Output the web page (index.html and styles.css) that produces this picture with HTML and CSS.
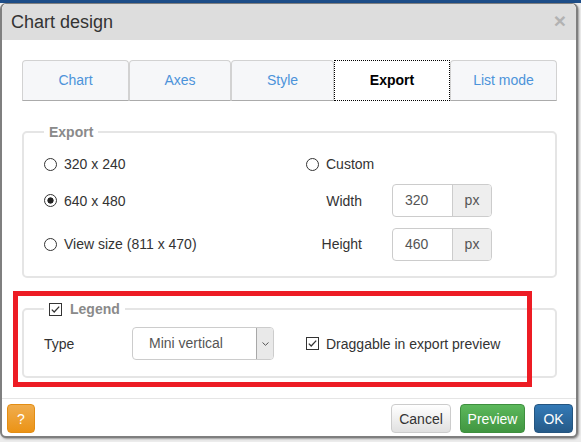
FILE: index.html
```html
<!DOCTYPE html>
<html>
<head>
<meta charset="utf-8">
<title>Chart design</title>
<link rel="stylesheet" href="styles.css">
</head>
<body>
<div class="dialog">
  <div class="header">
    <h1 class="title">Chart design</h1>
    <span class="close">×</span>
  </div>
  <div class="content">
    <ul class="tabs">
      <li class="tab tab-chart">Chart</li>
      <li class="tab tab-axes">Axes</li>
      <li class="tab tab-style">Style</li>
      <li class="tab tab-export active">Export</li>
      <li class="tab tab-list">List mode</li>
    </ul>
    <fieldset class="group group-export">
      <legend class="group-title">Export</legend>
      <div class="export-grid">
        <label class="radio"><span class="rb"></span>320 x 240</label>
        <label class="radio"><span class="rb"></span>Custom</label>
        <label class="radio"><span class="rb checked"></span>640 x 480</label>
        <div class="field">
          <span class="field-label">Width</span>
          <div class="input-group"><span class="input-value">320</span><span class="addon">px</span></div>
        </div>
        <label class="radio"><span class="rb"></span>View size (811 x 470)</label>
        <div class="field">
          <span class="field-label">Height</span>
          <div class="input-group"><span class="input-value">460</span><span class="addon">px</span></div>
        </div>
      </div>
    </fieldset>
    <fieldset class="group group-legend">
      <legend class="group-title legend-title">
        <svg class="cb" width="13" height="13" viewBox="0 0 13 13"><rect x="0.5" y="0.5" width="12" height="12" fill="#fff" stroke="#333"/><path d="M2.8 6.6 L5.2 9 L10.2 3.6" fill="none" stroke="#333" stroke-width="1.3"/></svg>
        <span>Legend</span>
      </legend>
      <div class="legend-row">
        <span class="type-label">Type</span>
        <div class="select">
          <span class="select-value">Mini vertical</span>
          <span class="select-arrow"><svg width="9" height="6" viewBox="0 0 9 6"><path d="M1.5 1.5 L4.5 4.3 L7.5 1.5" fill="none" stroke="#555" stroke-width="1"/></svg></span>
        </div>
        <label class="check">
          <svg class="cb" width="13" height="13" viewBox="0 0 13 13"><rect x="0.5" y="0.5" width="12" height="12" fill="#fff" stroke="#333"/><path d="M2.8 6.6 L5.2 9 L10.2 3.6" fill="none" stroke="#333" stroke-width="1.3"/></svg>
          <span>Draggable in export preview</span>
        </label>
      </div>
    </fieldset>
  </div>
  <div class="footer">
    <button class="btn btn-help">?</button>
    <div class="footer-right">
      <button class="btn btn-cancel">Cancel</button>
      <button class="btn btn-preview">Preview</button>
      <button class="btn btn-ok">OK</button>
    </div>
  </div>
</div>
<div class="annotation"></div>
</body>
</html>
```
FILE: styles.css
```css
html {
  background: linear-gradient(#1d4d88 0, #1d4d88 3px, #ececec 3px);
}
body {
  margin: 0;
  width: 581px;
  height: 442px;
  position: relative;
  overflow: hidden;
  font-family: "Liberation Sans", Arial, sans-serif;
  font-size: 14px;
  color: #333;
}
.dialog {
  margin-top: 3px;
  width: 578px;
  height: 435px;
  box-sizing: border-box;
  border: 2px solid #7f7f7f;
  border-top-width: 1px;
  border-radius: 6px;
  background: #fff;
  box-shadow: 1px 1px 2px rgba(0,0,0,0.35);
  overflow: hidden;
}
.header {
  height: 36px;
  background: #dddddd;
  display: flex;
  align-items: center;
  justify-content: space-between;
  padding: 0 10px 0 9px;
  border-radius: 5px 5px 0 0;
}
.title {
  margin: 0;
  font-size: 18px;
  font-weight: normal;
  color: #333;
}
.close {
  font-size: 21px;
  font-weight: bold;
  color: #b2b2b2;
  line-height: 1;
  margin-top: -3px;
}
.content {
  padding: 20px 19px 20px 20px;
}
.tabs {
  list-style: none;
  margin: 0;
  padding: 0;
  display: flex;
}
.tab {
  box-sizing: border-box;
  height: 41px;
  line-height: 39px;
  text-align: center;
  background: #f6f7f9;
  border: 1px solid #d2d2d2;
  border-bottom-color: #ababab;
  border-radius: 4px 4px 0 0;
  color: #4c93da;
}
.tab-chart { width: 107px; }
.tab-axes { width: 102px; }
.tab-style { width: 103px; }
.tab-export { width: 116px; }
.tab-list { width: 107px; }
.tab.active {
  background: #fff;
  border: 1px dotted #000;
  border-radius: 0;
  color: #000;
  font-weight: bold;
}
.group {
  margin: 23px 0 0;
  border: 2px solid #e5e5e5;
  border-radius: 5px;
  padding: 14px 20px 15px 20px;
  min-width: 0;
}
.group-legend {
  padding: 10px 20px 16px 20px;
}
.group-title {
  padding: 0 5px;
  line-height: 16px;
  font-weight: bold;
  color: #8a8a8a;
}
.legend-title {
  display: flex;
  align-items: center;
  gap: 8px;
}
.export-grid {
  display: grid;
  grid-template-columns: 262px auto;
  grid-template-rows: 20px 33px 34px;
  row-gap: 10px;
  align-items: center;
}
.radio {
  display: flex;
  align-items: center;
  color: #333;
}
.rb {
  width: 13px;
  height: 13px;
  box-sizing: border-box;
  border: 1px solid #333;
  border-radius: 50%;
  margin-right: 7px;
  background: #fff;
}
.rb.checked {
  background: radial-gradient(circle, #222 0, #222 2.8px, #fff 3.4px);
}
.field {
  display: flex;
  align-items: center;
}
.field-label {
  width: 56px;
  text-align: right;
  margin-right: 30px;
}
.input-group {
  display: flex;
  width: 100px;
  height: 33px;
  box-sizing: border-box;
  border: 1px solid #ccc;
  border-radius: 4px;
  overflow: hidden;
}
.input-value {
  flex: 1;
  padding-left: 12px;
  line-height: 31px;
  color: #555;
}
.addon {
  width: 38px;
  background: #eeeeee;
  border-left: 1px solid #ccc;
  text-align: center;
  line-height: 31px;
  color: #555;
}
.legend-row {
  display: flex;
  align-items: center;
}
.type-label {
  width: 88px;
}
.select {
  display: flex;
  width: 142px;
  height: 33px;
  box-sizing: border-box;
  border: 1px solid #ccc;
  border-radius: 4px;
  overflow: hidden;
}
.select-value {
  flex: 1;
  padding-left: 16px;
  line-height: 31px;
  color: #555;
}
.select-arrow {
  width: 16px;
  background: #e9e9e9;
  border-left: 1px solid #a8a8a8;
  display: flex;
  align-items: center;
  justify-content: center;
}
.check {
  display: flex;
  align-items: center;
  gap: 7px;
  margin-left: 32px;
}
.cb {
  display: block;
}
.footer {
  border-top: 1px solid #e5e5e5;
  padding: 5px 3px 4px 5px;
  display: flex;
  justify-content: space-between;
}
.footer-right {
  display: flex;
  gap: 9px;
}
.btn {
  height: 29px;
  box-sizing: border-box;
  border: 1px solid;
  border-radius: 4px;
  font-family: "Liberation Sans", Arial, sans-serif;
  font-size: 14px;
  padding: 0;
  text-align: center;
}
.btn-help {
  width: 28px;
  color: #fff;
  background: linear-gradient(#f0ad4e, #eb9316);
  border-color: #e38d13;
}
.btn-cancel {
  width: 60px;
  color: #333;
  background: linear-gradient(#ffffff, #e0e0e0);
  border-color: #cccccc;
}
.btn-preview {
  width: 65px;
  color: #fff;
  background: linear-gradient(#5cb85c, #419641);
  border-color: #3e8f3e;
}
.btn-ok {
  width: 39px;
  color: #fff;
  background: linear-gradient(#337ab7, #265a88);
  border-color: #245580;
}
.annotation {
  position: absolute;
  left: 13px;
  top: 291px;
  width: 519px;
  height: 96px;
  box-sizing: border-box;
  border: 5px solid #ed1c24;
}
```
